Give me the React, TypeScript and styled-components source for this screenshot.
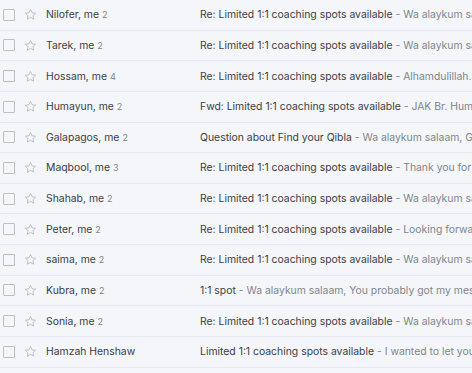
import React from 'react'
import styled, { createGlobalStyle } from 'styled-components'

const GlobalStyle = createGlobalStyle`
  html, body {
    margin: 0;
    padding: 0;
    background: #f4f6fa;
    overflow: hidden;
  }
  body {
    font-family: Inter, "Noto Sans", sans-serif;
    -webkit-font-smoothing: antialiased;
  }
`

type Thread = {
  from: string
  count?: number
  subject: string
  snippet: string
}

const threads: Thread[] = [
  { from: 'Nilofer, me', count: 2, subject: 'Re: Limited 1:1 coaching spots available', snippet: 'Wa alaykum salaam, Thank you for reaching out' },
  { from: 'Tarek, me', count: 2, subject: 'Re: Limited 1:1 coaching spots available', snippet: 'Wa alaykum salaam, I would love to join' },
  { from: 'Hossam, me', count: 4, subject: 'Re: Limited 1:1 coaching spots available', snippet: 'Alhamdulillah. I am glad to hear that' },
  { from: 'Humayun, me', count: 2, subject: 'Fwd: Limited 1:1 coaching spots available', snippet: 'JAK Br. Humayun for forwarding this' },
  { from: 'Galapagos, me', count: 2, subject: 'Question about Find your Qibla', snippet: 'Wa alaykum salaam, Great question' },
  { from: 'Maqbool, me', count: 3, subject: 'Re: Limited 1:1 coaching spots available', snippet: 'Thank you for the quick reply' },
  { from: 'Shahab, me', count: 2, subject: 'Re: Limited 1:1 coaching spots available', snippet: 'Wa alaykum salaam, Sounds good' },
  { from: 'Peter, me', count: 2, subject: 'Re: Limited 1:1 coaching spots available', snippet: 'Looking forward to our call' },
  { from: 'saima, me', count: 2, subject: 'Re: Limited 1:1 coaching spots available', snippet: 'Wa alaykum salaam, Of course' },
  { from: 'Kubra, me', count: 2, subject: '1:1 spot', snippet: 'Wa alaykum salaam, You probably got my message already' },
  { from: 'Sonia, me', count: 2, subject: 'Re: Limited 1:1 coaching spots available', snippet: 'Wa alaykum salaam, Yes please' },
  { from: 'Hamzah Henshaw', subject: 'Limited 1:1 coaching spots available', snippet: 'I wanted to let you know that a few spots opened up' },
]

const List = styled.div`
  display: flex;
  flex-direction: column;
  width: 472px;
`

const Row = styled.div`
  display: grid;
  grid-template-columns: 22px 24px 154px 1fr;
  align-items: center;
  height: 30.64px;
  box-sizing: border-box;
  border-bottom: 1px solid #e5e8ee;
  background: #f4f6fa;
  color: #3c4043;
  font-size: 10.4px;
  white-space: nowrap;
  overflow: hidden;
`

const Check = styled.span`
  width: 10px;
  height: 10px;
  margin-left: 3px;
  border: 1px solid #bcc0c5;
  border-radius: 1px;
`

const StarBox = styled.span`
  display: flex;
  align-items: center;
  margin-left: 2px;
`

const From = styled.span`
  overflow: hidden;
  text-overflow: ellipsis;
`

const Count = styled.span`
  margin-left: 3px;
  font-size: 9px;
  color: #80868b;
`

const Body = styled.span`
  overflow: hidden;
`

const Snippet = styled.span`
  color: #80868b;
`

function Star() {
  return (
    <svg width="13" height="13" viewBox="0 0 24 24" fill="none" stroke="#b6bac0" strokeWidth="1.6" strokeLinejoin="round">
      <path d="M12 2.8l2.8 6.1 6.7.7-5 4.5 1.4 6.6L12 17.3l-5.9 3.4 1.4-6.6-5-4.5 6.7-.7z" />
    </svg>
  )
}

export default function App() {
  return (
    <>
      <GlobalStyle />
      <List>
        {threads.map((t, i) => (
          <Row key={i}>
            <Check />
            <StarBox>
              <Star />
            </StarBox>
            <From>
              {t.from}
              {t.count && <Count>{t.count}</Count>}
            </From>
            <Body>
              {t.subject}
              <Snippet> - {t.snippet}</Snippet>
            </Body>
          </Row>
        ))}
      </List>
    </>
  )
}
